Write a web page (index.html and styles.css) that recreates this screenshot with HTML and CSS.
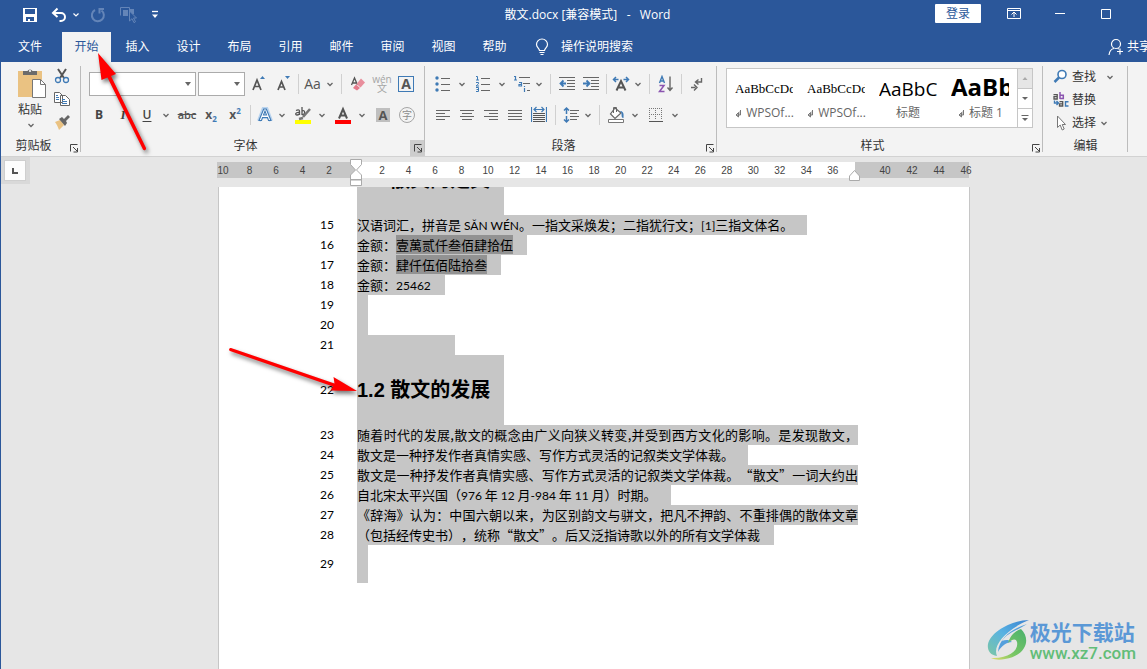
FILE: index.html
```html
<!DOCTYPE html>
<html lang="zh-CN">
<head>
<meta charset="utf-8">
<title>散文.docx [兼容模式] - Word</title>
<link rel="stylesheet" href="styles.css">
</head>
<body>
<svg class="defs" aria-hidden="true">
  <symbol id="chev" viewBox="0 0 14 24"><path d="M4.500 11l2.500 2.500L9.500 11" fill="none" stroke="#666" stroke-width="1.300"/></symbol>
  <symbol id="launch" viewBox="0 0 15 16"><path d="M4.500 11.500v-7h7M7 7l4 4M11.500 8v4h-4" fill="none" stroke="#444"/></symbol>
  <symbol id="ret" viewBox="0 0 8 10"><path d="M6.500 2v5h-4M4.500 4.500L2 7l2.500 2z" fill="#777" fill-opacity=".4" stroke="#777"/></symbol>
</svg>
<div class="window">
  <header class="titlebar">
    <div class="quick">
      <button aria-label="保存"><svg width="16" height="16" viewBox="0 0 16 16"><path d="M1 1h14v14H1z" fill="#fff"/><path d="M3 2h10v5H3zM4 10h8v4H8v-2H6v2H4z" fill="#2b579a"/></svg></button>
      <button aria-label="撤消"><svg width="16" height="16" viewBox="0 0 16 16"><path d="M6.500 1.500L2 6l4.500 4M2.500 6H10a4 4 0 010 8H8.500" fill="none" stroke="#fff" stroke-width="2"/></svg></button>
      <button class="narrow" aria-label="撤消选项"><svg width="8" height="16" viewBox="0 0 8 16"><path d="M1.500 6.500L4 9l2.500-2.500" fill="none" stroke="#fff" stroke-width="1.200"/></svg></button>
      <button class="dim" aria-label="重复"><svg width="16" height="16" viewBox="0 0 16 16"><path d="M5 3a6 6 0 106.500.5M9.500 6.500V2H14" fill="none" stroke="#6485b8" stroke-width="2"/></svg></button>
      <button class="dim" aria-label="触摸模式"><svg width="18" height="18" viewBox="0 0 18 18"><path d="M1.500 9.500v-8h9v2" fill="none" stroke="#6485b8"/><path d="M4 4h5v6H4zM10 3h5v5h-5z" fill="#6485b8"/><path d="M10.500 5v10l2.500-2.300 2 4 1.500-1-2-3.700h3z" fill="#2b579a" stroke="#6485b8"/></svg></button>
      <button class="narrow more" aria-label="自定义快速访问工具栏"><svg width="8" height="10" viewBox="0 0 8 10"><path d="M1 1.500h6" stroke="#fff" stroke-width="1.300"/><path d="M1 4.500h6L4 8z" fill="#fff"/></svg></button>
    </div>
    <h1 class="doc-title">散文.docx [兼容模式] &nbsp;&nbsp;-&nbsp;&nbsp; Word</h1>
    <div class="win-controls">
      <button class="signin">登录</button>
      <button class="wc" aria-label="功能区显示选项"><svg width="14" height="12" viewBox="0 0 14 12"><path d="M.5.500h13v10H.5zM.5 2.500h13M7 9V4.500M4.500 6.500L7 4l2.500 2.500" fill="none" stroke="#fff"/></svg></button>
      <button class="wc" aria-label="最小化"><svg width="12" height="12" viewBox="0 0 12 12"><path d="M1 5.500h10" stroke="#fff"/></svg></button>
      <button class="wc" aria-label="最大化"><svg width="12" height="12" viewBox="0 0 12 12"><path d="M1.500 1.500h9v9h-9z" fill="none" stroke="#fff"/></svg></button>
    </div>
  </header>

  <nav class="tabs">
    <button class="tab file">文件</button>
    <button class="tab active">开始</button>
    <button class="tab">插入</button>
    <button class="tab">设计</button>
    <button class="tab">布局</button>
    <button class="tab">引用</button>
    <button class="tab">邮件</button>
    <button class="tab">审阅</button>
    <button class="tab">视图</button>
    <button class="tab">帮助</button>
    <button class="tell"><svg width="14" height="18" viewBox="0 0 14 18"><path d="M4.500 12.500c0-2-3-3-3-6a5.400 5.400 0 0111 0c0 3-3 4-3 6zM4.500 14.500h5M5.500 16.500h3" fill="none" stroke="#fff" stroke-width="1.200"/></svg>操作说明搜索</button>
    <button class="share"><svg width="16" height="18" viewBox="0 0 16 18"><circle cx="8" cy="6" r="4.500" fill="none" stroke="#fff" stroke-width="1.200"/><path d="M1 17c.5-4 2-6 5-6.500M9.500 10.500l1.500.5M12 10.500v6M9 13.500h6" fill="none" stroke="#fff" stroke-width="1.200"/></svg>共享</button>
  </nav>

  <div class="workspace">
  <section class="ribbon">
    <div class="group clipboard">
      <div class="clip-body">
        <button class="paste"><svg width="30" height="31" viewBox="0 0 30 31"><path d="M1 3h24v26H1z" fill="#eac282"/><path d="M6 7V3h4.500a2.800 2.800 0 015 0H20v4z" fill="#6b6b6b"/><circle cx="13" cy="3" r="1" fill="#fff"/><path d="M15.500 11.500h8l5 5v13h-13z" fill="#fff" stroke="#777"/><path d="M23.500 11.500v5h5" fill="none" stroke="#777"/></svg><span>粘贴</span><svg width="14" height="12" viewBox="0 6 14 12"><use href="#chev" width="14" height="24"/></svg></button>
        <div class="clip-side">
          <button aria-label="剪切"><svg width="16" height="16" viewBox="0 0 16 16"><path d="M4 1l6 9M12 1L6 10" stroke="#555" stroke-width="2"/><circle cx="4" cy="12" r="2.500" fill="none" stroke="#3f7ab5" stroke-width="1.300"/><circle cx="12" cy="12" r="2.500" fill="none" stroke="#3f7ab5" stroke-width="1.300"/></svg></button>
          <button aria-label="复制"><svg width="16" height="16" viewBox="0 0 16 16"><path d="M.5 1.500h5l3 3v7h-8zM6.500 4.500h5l4 4v6h-9z" fill="#fff" stroke="#666"/><path d="M2 4.500h2M2 6.500h3M2 8.500h3M8 8.500h3M8 10.500h5M8 12.500h5" stroke="#3f7ab5"/></svg></button>
          <button aria-label="格式刷"><svg width="16" height="16" viewBox="0 0 16 16"><path d="M1 8l5-2 4 5-5 5C4 13 3 11 1 8z" fill="#eac282"/><path d="M5 5l3-2 2 2 4-4 2 2-4 4 1 2-2 3z" fill="#666"/></svg></button>
        </div>
      </div>
      <footer><span>剪贴板</span><button class="launcher" aria-label="剪贴板选项"><svg><use href="#launch"/></svg></button></footer>
    </div>

    <div class="group font">
      <div class="tools">
        <div class="row">
          <label class="combo family"><select aria-label="字体"><option></option></select><svg width="8" height="5" viewBox="0 0 8 5"><path d="M1 0h6L4 4z" fill="#666"/></svg></label>
          <label class="combo size"><select aria-label="字号"><option></option></select><svg width="8" height="5" viewBox="0 0 8 5"><path d="M1 0h6L4 4z" fill="#666"/></svg></label>
          <button class="t" aria-label="增大字号"><svg width="16" height="18" viewBox="0 0 16 18"><path d="M2 15L6 5l4 10M3.500 11.500h5" fill="none" stroke="#555" stroke-width="1.700"/><path d="M9 4h5l-2.500-3z" fill="#3f7ab5"/></svg></button>
          <button class="t" aria-label="减小字号"><svg width="16" height="18" viewBox="0 0 16 18"><path d="M3 15l3.500-8.500L10 15M4.500 12h4" fill="none" stroke="#555" stroke-width="1.700"/><path d="M10 1h5l-2.500 3z" fill="#3f7ab5"/></svg></button>
          <i class="sep"></i>
          <button class="t s aa" aria-label="更改大小写">Aa</button><button class="c" aria-label="大小写选项"><svg><use href="#chev"/></svg></button>
          <i class="sep wide"></i>
          <button class="t" aria-label="清除格式"><svg width="16" height="18" viewBox="0 0 16 18"><path d="M1.500 10L4.500 3l3 7M2.500 8h4" fill="none" stroke="#555" stroke-width="1.300"/><path d="M11 3.500l4 4-4.500 5-4-3.500z" fill="#e88e9c"/><path d="M6 9.500l4 3.500L7 15.500 3 13z" fill="#e4798b"/></svg></button>
          <button class="t pinyin" aria-label="拼音指南"><span>wén</span><span>文</span></button>
          <button class="t" aria-label="字符边框"><span class="boxed">A</span></button>
        </div>
        <div class="row">
          <button class="t bold">B</button>
          <button class="t ital">I</button>
          <button class="t under">U</button><button class="c" aria-label="下划线选项"><svg><use href="#chev"/></svg></button>
          <button class="t strike">abc</button>
          <button class="t script">x<sub>2</sub></button>
          <button class="t script">x<sup>2</sup></button>
          <i class="sep"></i>
          <button class="t s" aria-label="文本效果"><svg width="16" height="18" viewBox="0 0 16 18"><path d="M2 15L6.500 3h3L14 15M5 11h6" fill="none" stroke="#b9d3ee" stroke-width="4"/><path d="M2 14.500L6.700 3h2.600L14 14.500h-2.500L10.500 11.500h-5L4.500 14.500zM6.500 9h3L8 5z" fill="#fff" stroke="#3f7ab5" stroke-width="1.100"/></svg></button><button class="c" aria-label="文本效果选项"><svg><use href="#chev"/></svg></button>
          <button class="t" aria-label="突出显示"><svg width="18" height="18" viewBox="0 0 18 18"><path d="M1 14h16v4H1z" fill="#ff0"/><path d="M2 4.500c3-1.500 3.500 0 3.500 1v3.500M5.500 6.500C1 6 1 9 3 9s2.500-1 2.500-2.500M8 1v8M8 5c3-2 4 4 0 3.500" fill="none" stroke="#555" stroke-width="1.300"/><path d="M16 3l-7 8M5 13l4-1" stroke="#777" stroke-width="2.500"/></svg></button><button class="c" aria-label="突出显示颜色"><svg><use href="#chev"/></svg></button>
          <button class="t" aria-label="字体颜色"><svg width="16" height="18" viewBox="0 0 16 18"><path d="M0 14h16v4H0z" fill="#f00"/><path d="M4 12.500L8 3l4 9.500M5.500 9.500h5" fill="none" stroke="#555" stroke-width="2"/></svg></button><button class="c" aria-label="字体颜色选项"><svg><use href="#chev"/></svg></button>
          <button class="t" aria-label="字符底纹"><span class="shaded">A</span></button>
          <button class="t" aria-label="带圈字符"><span class="ring">字</span></button>
        </div>
      </div>
      <footer><span>字体</span><button class="launcher on" aria-label="字体选项"><svg><use href="#launch"/></svg></button></footer>
    </div>

    <div class="group para">
      <div class="tools">
        <div class="row">
          <button class="t" aria-label="项目符号"><svg width="16" height="18" viewBox="0 0 16 18"><g fill="#3f7ab5"><circle cx="2" cy="3" r="1.700"/><circle cx="2" cy="9" r="1.700"/><circle cx="2" cy="15" r="1.700"/></g><path d="M6 3.500h9M6 9.500h9M6 15.500h9" stroke="#666"/></svg></button><button class="c" aria-label="项目符号选项"><svg><use href="#chev"/></svg></button>
          <button class="t" aria-label="编号"><svg width="16" height="18" viewBox="0 0 16 18"><path d="M1 1.500h1.500V5M1 5h3M1 7.500h2.500v1.300L1 11h3M1 12.500h2.500v4H1M1.500 14.500h2" fill="none" stroke="#3f7ab5"/><path d="M6 3.500h9M6 9.500h9M6 15.500h9" stroke="#666"/></svg></button><button class="c" aria-label="编号选项"><svg><use href="#chev"/></svg></button>
          <button class="t s" aria-label="多级列表"><svg width="18" height="18" viewBox="0 0 18 18"><path d="M1 1.500h1.500V5M1 5h3M6 7.500h2.500V11H6V9.500h2M11.500 13v4M11.500 11v1" fill="none" stroke="#3f7ab5" stroke-width="1.200"/><path d="M6 2.500h11M10 8.500h7M14 15.500h3" stroke="#666"/></svg></button><button class="c" aria-label="多级列表选项"><svg><use href="#chev"/></svg></button>
          <i class="sep wide"></i>
          <button class="t" aria-label="减少缩进"><svg width="16" height="18" viewBox="0 0 16 18"><path d="M0 2.500h16M8 5.500h8M8 8.500h8M8 11.500h8M0 14.500h16" stroke="#666"/><path d="M7 8.500H2M4.500 5.500l-3 3 3 3" fill="none" stroke="#3f7ab5" stroke-width="1.800"/></svg></button>
          <button class="t" aria-label="增加缩进"><svg width="16" height="18" viewBox="0 0 16 18"><path d="M0 2.500h16M8 5.500h8M8 8.500h8M8 11.500h8M0 14.500h16" stroke="#666"/><path d="M0 8.500h6M3.500 5.500l3 3-3 3" fill="none" stroke="#3f7ab5" stroke-width="1.800"/></svg></button>
          <i class="sep"></i>
          <button class="t s" aria-label="中文版式"><svg width="18" height="18" viewBox="0 0 18 18"><path d="M4.500 15.500L9 6l4.500 9.500M6 12.500h6" fill="none" stroke="#555" stroke-width="2"/><path d="M6.500 4.500H2M4 2L1.500 4.500 4 7M11.500 4.500H16M14 2l2.500 2.500L14 7" fill="none" stroke="#3f7ab5" stroke-width="1.500"/></svg></button><button class="c" aria-label="中文版式选项"><svg><use href="#chev"/></svg></button>
          <i class="sep wide"></i>
          <button class="t" aria-label="排序"><svg width="16" height="18" viewBox="0 0 16 18"><path d="M1.500 8L4 1.500 6.500 8M2.500 6h3" fill="none" stroke="#3f7ab5" stroke-width="1.400"/><path d="M1.500 10.500h4.500l-4.500 6h5" fill="none" stroke="#8b55b0" stroke-width="1.500"/><path d="M12 1.500v14M9.500 12.500L12 15.500l2.500-3" fill="none" stroke="#666" stroke-width="1.400"/></svg></button>
          <i class="sep"></i>
          <button class="t" aria-label="显示编辑标记"><svg width="12" height="16" viewBox="0 0 12 16"><path d="M10.500 2v4H5M7.500 3.500L4.500 6l3 2.500M0 11.500h4.500M3 8.500l3 3-3 3" fill="none" stroke="#666" stroke-width="1.400"/></svg></button>
        </div>
        <div class="row">
          <button class="t" aria-label="左对齐"><svg width="16" height="18" viewBox="0 0 16 18"><path d="M1 4.500h14M1 7.500h9M1 10.500h14M1 13.500h9" stroke="#666"/></svg></button>
          <button class="t" aria-label="居中"><svg width="16" height="18" viewBox="0 0 16 18"><path d="M1 4.500h14M3 7.500h10M1 10.500h14M3 13.500h10" stroke="#666"/></svg></button>
          <button class="t" aria-label="右对齐"><svg width="16" height="18" viewBox="0 0 16 18"><path d="M1 4.500h14M6 7.500h9M1 10.500h14M6 13.500h9" stroke="#666"/></svg></button>
          <button class="t" aria-label="两端对齐"><svg width="16" height="18" viewBox="0 0 16 18"><path d="M1 4.500h14M1 7.500h14M1 10.500h14M1 13.500h14" stroke="#666"/></svg></button>
          <button class="t" aria-label="分散对齐"><svg width="16" height="18" viewBox="0 0 16 18"><path d="M.5 1v15M15.500 1v15M3.500 3.500h9M5.500 1l-2.500 2.500L5.500 6M10.500 1L13 3.500 10.500 6" fill="none" stroke="#3f7ab5" stroke-width="1.200"/><path d="M2 7.500h12M2 9.500h12M2 11.500h12M2 13.500h12M2 15.500h12" stroke="#555"/></svg></button>
          <i class="sep wide"></i>
          <button class="t s" aria-label="行距"><svg width="16" height="18" viewBox="0 0 16 18"><path d="M3.500 2v6M1 4.500L3.500 2 6 4.500M3.500 10v6M1 13.500L3.500 16 6 13.500" fill="none" stroke="#3f7ab5" stroke-width="1.500"/><path d="M7 4.500h9M7 7.500h7M7 10.500h9M7 13.500h7" stroke="#666"/></svg></button><button class="c" aria-label="行距选项"><svg><use href="#chev"/></svg></button>
          <i class="sep wide"></i>
          <button class="t" aria-label="底纹"><svg width="18" height="18" viewBox="0 0 18 18"><path d="M1.500 13.500h15v3h-15z" fill="#fff" stroke="#777"/><path d="M8 2l6 5-6 5.500L3.500 8z" fill="#fff" stroke="#666" stroke-width="1.200"/><path d="M6.500 7V1.500h3V6" fill="none" stroke="#666"/><path d="M13 5c3 0 4 2 3.500 7-2 0-2-2-2-5z" fill="#3f7ab5"/></svg></button><button class="c" aria-label="底纹选项"><svg><use href="#chev"/></svg></button>
          <button class="t" aria-label="边框"><svg width="14" height="16" viewBox="0 0 14 16"><path d="M0 1.500h14M0 7.500h14M.5 1v12M6.500 1v12M12.500 1v12" stroke="#777" stroke-dasharray="1 1"/><path d="M0 14.500h14" stroke="#555"/></svg></button><button class="c" aria-label="边框选项"><svg><use href="#chev"/></svg></button>
        </div>
      </div>
      <footer><span>段落</span><button class="launcher" aria-label="段落选项"><svg><use href="#launch"/></svg></button></footer>
    </div>

    <div class="group styles">
      <div class="gallery">
        <button class="style"><span class="sample serif">AaBbCcDd</span><span class="name"><svg width="8" height="10"><use href="#ret"/></svg>WPSOf...</span></button>
        <button class="style"><span class="sample serif">AaBbCcDd</span><span class="name"><svg width="8" height="10"><use href="#ret"/></svg>WPSOf...</span></button>
        <button class="style"><span class="sample title">AaBbC</span><span class="name">标题</span></button>
        <button class="style"><span class="sample h1">AaBb</span><span class="name"><svg width="8" height="10"><use href="#ret"/></svg>标题 1</span></button>
        <div class="scroller">
          <button class="off" aria-label="上一行"><svg width="8" height="5" viewBox="0 0 8 5"><path d="M1.500 4h5L4 1z" fill="#aaa"/></svg></button>
          <button aria-label="下一行"><svg width="8" height="5" viewBox="0 0 8 5"><path d="M1 1h6L4 4z" fill="#666"/></svg></button>
          <button aria-label="其他"><svg width="8" height="8" viewBox="0 0 8 8"><path d="M.5 1.500h7" stroke="#666"/><path d="M1 4h6L4 7z" fill="#666"/></svg></button>
        </div>
      </div>
      <footer><span>样式</span><button class="launcher" aria-label="样式选项"><svg><use href="#launch"/></svg></button></footer>
    </div>

    <div class="group editing">
      <div class="edit-list">
        <button><svg width="16" height="16" viewBox="0 0 16 16"><circle cx="9" cy="5.500" r="4" fill="#fff" stroke="#3f7ab5" stroke-width="1.600"/><path d="M6 8.500L1.500 13" stroke="#3f7ab5" stroke-width="2.500"/></svg><span>查找</span><svg class="dd far"><use href="#chev"/></svg></button>
        <button><svg width="16" height="16" viewBox="0 0 16 16"><path d="M.5 2.700h3.700V7H1V4.700h3M6.500 9.700h3.200V14H6.500v-2.200h3" fill="none" stroke="#555" stroke-width="1.300"/><path d="M7 0v7M7 3.200h3.300V6.500H7" fill="none" stroke="#8b55b0" stroke-width="1.500"/><path d="M15.500 9.700h-3V14h3M1.500 8.500V11H5M3.500 9l2 2-2 2" fill="none" stroke="#3f7ab5" stroke-width="1.400"/></svg><span>替换</span></button>
        <button><svg width="16" height="16" viewBox="0 0 16 16"><path d="M4.500 1v11.500l2.700-2.500 2 5 2-1-2-4.500h3.300z" fill="#fff" stroke="#777"/></svg><span>选择</span><svg class="dd"><use href="#chev"/></svg></button>
      </div>
      <footer><span>编辑</span></footer>
    </div>
  </section>

  <div class="ruler">
    <div class="corner"><button aria-label="左对齐制表符"><svg width="8" height="8" viewBox="0 0 8 8"><path d="M2 1v5h5" fill="none" stroke="#555" stroke-width="2"/></svg></button></div>
    <div class="scale">
      <div class="band left"><span>10</span><span>8</span><span>6</span><span>4</span><span>2</span></div>
      <div class="band mid">
        <svg class="indent-l" width="14" height="28" viewBox="0 0 14 28"><path d="M1.500.500h11v5L7.500 11l5 5v5h-11v-5l5-5-5-5.500zM1.500 20.500h11v6h-11z" fill="#fff" stroke="#aaa"/></svg>
        <span>2</span><span>4</span><span>6</span><span>8</span><span>10</span><span>12</span><span>14</span><span>16</span><span>18</span><span>20</span><span>22</span><span>24</span><span>26</span><span>28</span><span>30</span><span>32</span><span>34</span><span>36</span>
        <svg class="indent-r" width="12" height="12" viewBox="0 0 12 12"><path d="M.5 10.500V6L5.500.5l5 5.500v4.500z" fill="#fff" stroke="#aaa"/></svg>
      </div>
      <div class="band right"><span>40</span><span>42</span><span>44</span><span>46</span></div>
    </div>
  </div>

  <main class="page">
    <div class="cut"><div class="line head"><span class="no"></span><h2 class="sel">1.1 散文的定义</h2></div></div>
    <div class="line"><span class="no">15</span><p class="sel">汉语词汇，拼音是 <span class="lat">SǍN WÉN</span>。一指文采焕发；二指犹行文；<span class="lat">[1]</span>三指文体名。</p></div>
    <div class="line"><span class="no">16</span><p class="sel">金额：<mark>壹萬贰仟叁佰肆拾伍</mark></p></div>
    <div class="line"><span class="no">17</span><p class="sel">金额：<mark>肆仟伍佰陆拾叁</mark></p></div>
    <div class="line"><span class="no">18</span><p class="sel">金额：<span class="lat">25462</span></p></div>
    <div class="line"><span class="no">19</span><p class="sel"></p></div>
    <div class="line"><span class="no">20</span><p class="sel"></p></div>
    <div class="line"><span class="no">21</span><p class="sel brk"></p></div>
    <div class="line head"><span class="no">22</span><h2 class="sel">1.2 散文的发展</h2></div>
    <div class="line"><span class="no">23</span><p class="sel full">随着时代的发展,散文的概念由广义向狭义转变,并受到西方文化的影响。是发现散文，</p></div>
    <div class="line"><span class="no">24</span><p class="sel">散文是一种抒发作者真情实感、写作方式灵活的记叙类文学体裁。</p></div>
    <div class="line"><span class="no">25</span><p class="sel full">散文是一种抒发作者真情实感、写作方式灵活的记叙类文学体裁。“散文”一词大约出</p></div>
    <div class="line"><span class="no">26</span><p class="sel">自北宋太平兴国（<span class="lat">976</span> 年 <span class="lat">12</span> 月<span class="lat">-984</span> 年 <span class="lat">11</span> 月）时期。</p></div>
    <div class="line"><span class="no">27</span><p class="sel full">《辞海》认为：中国六朝以来，为区别韵文与骈文，把凡不押韵、不重排偶的散体文章</p></div>
    <div class="line"><span class="no">28</span><p class="sel">（包括经传史书），统称“散文”。后又泛指诗歌以外的所有文学体裁</p></div>
    <div class="line last"><span class="no">29</span><p class="sel"></p></div>
  </main>
  </div>

  <svg class="arrow a1" width="72" height="112" viewBox="90 46 72 112"><path d="M98 53L101.500 80l6-2.500L143 149.500a1.700 1.700 0 003-1.500L111 76l5-2z" fill="#f00"/></svg>
  <svg class="arrow a2" width="144" height="64" viewBox="224 340 144 64"><path d="M357 391L333.500 377l1 6.500L231 348a1.600 1.600 0 00-1 3L333 386.500l-2.500 4z" fill="#f00"/></svg>

  <div class="watermark">
    <svg width="46" height="44" viewBox="0 0 46 44"><defs><linearGradient id="g1" x1="1" y1="0" x2="0" y2="1"><stop offset="0" stop-color="#3b82d0"/><stop offset=".5" stop-color="#58b2e2"/><stop offset="1" stop-color="#7cc7a4"/></linearGradient><linearGradient id="g2" x1="1" y1="0" x2="0" y2="1"><stop offset="0" stop-color="#48b06c"/><stop offset=".6" stop-color="#79c765"/><stop offset="1" stop-color="#e3dc6b"/></linearGradient></defs><path d="M42 1C26 1 4 12 1 25c-1 6 2 11 9 12C5 26 20 10 42 1z" fill="url(#g1)"/><path d="M40 5C27 9 12 18 11 33c3-6 9-10 14-10-4-3-7-2-10-1C20 14 31 11 40 5z" fill="#549fdc"/><path d="M34 10c11 11 4 27-16 30-5 1-10 1-14-1 17 1 28-7 26-16-1-4-5-3-9 1 2-7 7-12 13-14z" fill="url(#g2)"/></svg>
    <div><strong>极光下载站</strong><span>www.xz7.com</span></div>
  </div>
</div>
</body>
</html>
```
FILE: styles.css
```css
* { box-sizing: border-box; }
body { margin: 0; background: #e6e6e6; font: 12px/16px "Open Sans", "Noto Sans CJK SC", sans-serif; color: #333; }
button { border: 0; padding: 0; margin: 0; background: none; font: inherit; color: inherit; display: flex; align-items: center; justify-content: center; white-space: nowrap; }
h1, h2, p { margin: 0; font: inherit; }
svg { display: block; flex: none; }
.defs { position: absolute; width: 0; height: 0; }
.window { position: relative; height: 100vh; overflow: hidden; display: flex; flex-direction: column; }

.titlebar { height: 32px; flex: none; background: #2b579a; color: #fff; display: grid; grid-template-columns: 1fr auto 1fr; align-items: start; padding-left: 22px; }
.quick { display: flex; align-items: center; height: 30px; }
.quick button { width: 16px; margin-right: 13px; }
.quick .narrow { width: 8px; margin: 0 9px 0 -8px; }
.quick .dim { width: 17px; }
.quick .more { margin-left: 2px; }
.doc-title { line-height: 30px; margin-left: 6px; white-space: nowrap; }
.win-controls { display: flex; justify-content: flex-end; padding-top: 4px; }
.signin { width: 46px; height: 19px; background: #fff; color: #2b579a; border-radius: 1px; margin-right: 10px; }
.wc { width: 46px; height: 19px; }
.win-controls .wc:last-child { margin-right: 18px; }

.tabs { height: 30px; flex: none; background: #2b579a; color: #fff; display: flex; gap: 2px; }
.tab { width: 49px; flex: none; }
.file { width: 60px; }
.active { background: #f3f3f3; color: #2b579a; }
.tell { gap: 12px; margin-left: 14px; }
.share { gap: 3px; margin-left: auto; margin-right: -4px; }

.workspace { flex: 1; min-height: 0; border-left: 1px solid #2b579a; display: flex; flex-direction: column; }
.ribbon { flex: none; height: 95px; background: #f3f3f3; border-bottom: 1px solid #d2d2d2; display: flex; }
.group { position: relative; display: flex; flex-direction: column; justify-content: space-between; flex: none; }
.group::after { content: ""; position: absolute; right: 0; top: 4px; bottom: 4px; width: 1px; background: #bcbcbc; }
.group footer { height: 16px; display: flex; align-items: center; color: #333; }
.group footer span { flex: 1; text-align: center; line-height: 14px; padding-bottom: 4px; }
.launcher { width: 15px; height: 16px; }
.launcher svg { width: 15px; height: 16px; }
.launcher.on { background: #cdcdcd; }
.clipboard { width: 80px; }
.font { width: 344px; }
.para { width: 292px; }
.styles { flex: 0 0 326px; }
.editing { width: 85px; }

.clip-body { display: flex; padding: 6px 0 0 16px; }
.paste { flex-direction: column; width: 30px; justify-content: flex-start; }
.paste span { line-height: 18px; margin: 2px 4px 0 0; }
.paste svg:last-child { margin-right: 2px; }
.clip-side { display: flex; flex-direction: column; gap: 7px; margin-left: 7px; }

.tools { padding-top: 10px; display: flex; flex-direction: column; gap: 7px; }
.font .tools, .para .tools { padding-left: 6px; }
.row { display: flex; align-items: center; height: 24px; }
.t { width: 24px; height: 24px; }
.t.s { width: 21px; }
.c { width: 14px; height: 24px; }
.c svg { width: 14px; height: 24px; }
.c + .t { margin-left: 2px; }
.sep { width: 1px; height: 20px; margin: 0 3px; background: #d0d0d0; }
.sep.wide { margin: 0 4px; }
.combo { display: grid; align-items: center; height: 24px; background: #fff; border: 1px solid #ababab; }
.combo select, .combo svg { grid-area: 1 / 1; }
.combo select { appearance: none; border: 0; background: none; width: 100%; height: 22px; padding: 0 16px 0 4px; font: inherit; }
.combo svg { justify-self: end; margin-right: 3px; pointer-events: none; }
.family { width: 107px; margin: 0 2px; }
.size { width: 47px; margin-right: 2px; }
.aa { font-size: 14px; color: #555; }
.pinyin { flex-direction: column; color: #a5a5a5; font-size: 10px; line-height: 9px; }
.boxed { width: 16px; height: 16px; border: 1px solid #3f7ab5; font: bold 14px/14px "Open Sans", sans-serif; color: #555; }
.shaded { width: 14px; height: 14px; background: #bfbfbf; font: bold 13px/14px "Open Sans", sans-serif; color: #555; }
.ring { width: 16px; height: 16px; border: 1px solid #a5a5a5; border-radius: 50%; font-size: 10px; line-height: 14px; color: #8c8c8c; }
.bold { font-weight: 700; color: #444; }
.ital { font: italic bold 13px/16px "Liberation Serif", serif; color: #444; }
.under { font-weight: 600; text-decoration: underline; text-underline-offset: 2px; color: #444; }
.strike { font-size: 11px; font-weight: 600; text-decoration: line-through; color: #555; }
.script { font-weight: 700; color: #555; }
.script sub, .script sup { font-size: 8px; line-height: 8px; color: #3f7ab5; }
.script sup { align-self: flex-start; margin-top: 4px; }
.script sub { align-self: flex-end; margin-bottom: 4px; }

.gallery { margin: 6px 10px 0 9px; height: 60px; border: 1px solid #c6c6c6; background: #fff; display: flex; padding-left: 1px; }
.style { width: 72px; flex-direction: column; justify-content: flex-start; }
.sample { width: 58px; height: 34px; line-height: 39px; overflow: hidden; text-align: left; color: #000; }
.serif { font-family: "Liberation Serif", serif; font-size: 13px; }
.title { font-size: 19px; line-height: 41px; }
.h1 { font-size: 24px; font-weight: 700; line-height: 35px; }
.name { display: flex; align-items: center; gap: 4px; color: #666; line-height: 20px; }
.scroller { width: 15px; margin-left: auto; border-left: 1px solid #c6c6c6; display: grid; grid-template-rows: 1fr 1fr 1fr; }
.scroller button + button { border-top: 1px solid #c6c6c6; }
.scroller .off { background: #e6e6e6; }

.edit-list { display: flex; flex-direction: column; align-items: flex-start; gap: 7px; padding: 7px 0 0 10px; }
.edit-list button { gap: 3px; height: 16px; }
.dd { width: 14px; height: 24px; margin-left: -2px; }
.dd.far { margin-left: 4px; }

.ruler { flex: none; height: 30px; display: flex; }
.corner { width: 29px; height: 27px; background: #d9d9d9; padding: 3px 0 0 3px; }
.corner button { width: 22px; height: 21px; background: #fdfdfd; border: 1px solid #cfcfcf; }
.scale { display: flex; width: 752px; height: 16px; margin: 5px 0 0 187px; font: 10px/17px "Liberation Sans", sans-serif; color: #444; }
.band { display: flex; justify-content: space-between; position: relative; background: #c6c6c6; }
.band span { width: 12px; display: flex; justify-content: center; }
.band.left { width: 139px; padding-right: 21px; }
.band.mid { flex: 1; background: #fff; padding: 0 16px 0 20px; z-index: 1; }
.band.right { width: 114px; padding-left: 24px; justify-content: flex-start; gap: 15px; }
.band.right span { flex: none; }
.indent-l { position: absolute; left: -7px; top: -3px; }
.indent-r { position: absolute; right: -6px; top: 8px; }

.page { flex: 1; min-height: 0; width: 752px; margin-left: 217px; background: #fff; border: solid #c6c6c6; border-width: 0 1px; color: #000; font: 13px/20px "Noto Sans CJK SC", sans-serif; text-spacing-trim: space-all; overflow: hidden; }
.cut { height: 28px; overflow: hidden; display: flex; align-items: flex-end; }
.line { display: flex; height: 20px; }
.no { width: 115px; margin-right: 23px; text-align: right; font: 12px/20px Lato, sans-serif; align-self: center; }
.sel { background: #c6c6c6; padding-right: 14px; white-space: nowrap; }
.sel:empty { padding-right: 11px; }
.sel.brk { padding-right: 98px; }
.sel.full { width: 501px; padding-right: 0; text-align-last: justify; }
.lat { font: 12px/1px Lato, sans-serif; }
mark { background: #929292; color: inherit; }
.head { height: 70px; flex: none; }
.head h2 { font: bold 20px/70px "Liberation Sans", "Noto Sans CJK SC", sans-serif; }
.last { height: 38px; }

.arrow { position: absolute; filter: drop-shadow(2px 3px 2px #0008); pointer-events: none; }
.a1 { left: 90px; top: 46px; }
.a2 { left: 224px; top: 340px; }
.watermark { position: absolute; right: 11px; bottom: 6px; display: flex; align-items: center; }
.watermark div { display: flex; flex-direction: column; margin-left: -3px; }
.watermark strong { font: bold 21px/24px "Noto Sans CJK SC", sans-serif; color: #5b98d6; }
.watermark span { font: 500 17px/20px Roboto, sans-serif; color: #62bd78; }
```
